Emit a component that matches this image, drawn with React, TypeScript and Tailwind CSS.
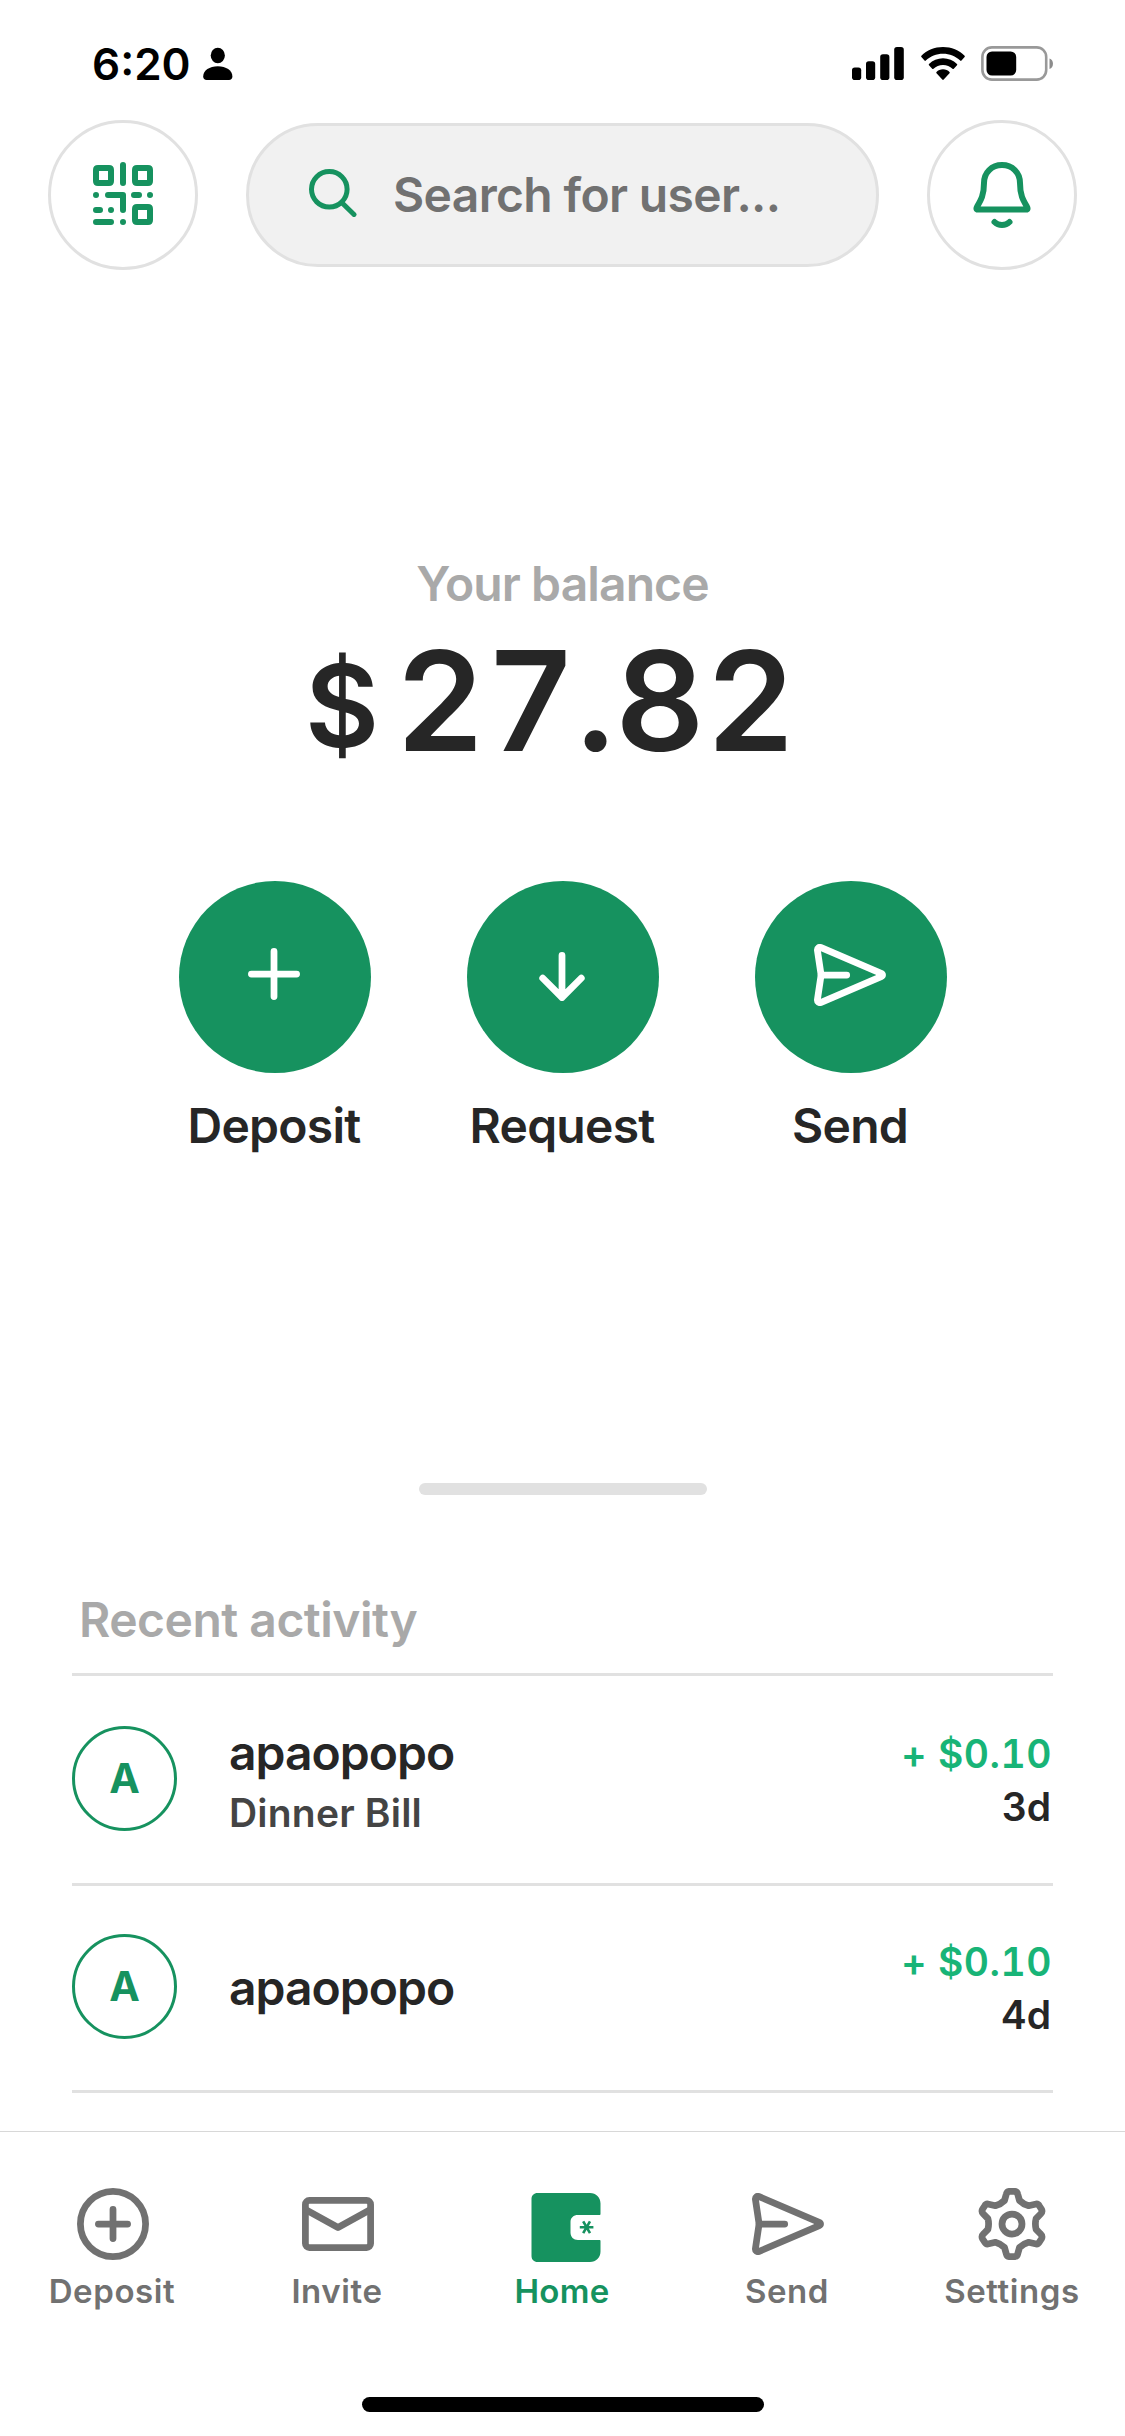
import React from 'react';

interface IconProps {
  className?: string;
}

const StatusPersonIcon: React.FC<IconProps> = ({ className }) => (
  <svg viewBox="0 0 30 34" className={className} fill="currentColor">
    <ellipse cx="14.8" cy="8.5" rx="7.1" ry="7.7" />
    <path d="M0.2 29.5C0.2 23.5 6.5 19.3 14.8 19.3S29.4 23.5 29.4 29.5C29.4 31.8 28 33 26 33H3.6C1.6 33 0.2 31.8 0.2 29.5Z" />
  </svg>
);

const SignalIcon: React.FC<IconProps> = ({ className }) => (
  <svg viewBox="0 0 52 33" className={className} fill="currentColor">
    <rect x="0" y="20.5" width="9.2" height="12.5" rx="2.8" />
    <rect x="14" y="14.3" width="9.2" height="18.7" rx="2.8" />
    <rect x="28.2" y="7.2" width="9.2" height="25.8" rx="2.8" />
    <rect x="42.2" y="0" width="9.6" height="33" rx="2.8" />
  </svg>
);

const WifiIcon: React.FC<IconProps> = ({ className }) => (
  <svg viewBox="0 0 44 33" className={className} fill="currentColor">
    <path d="M22 0C13.6 0 5.8 3.2 0.4 8.7C0 9.1 0 9.6 0.4 10L3.5 13.6C3.9 14 4.4 14 4.8 13.6C9.3 9.3 15.4 6.8 22 6.8S34.7 9.3 39.2 13.6C39.6 14 40.1 14 40.5 13.6L43.6 10C44 9.6 44 9.1 43.6 8.7C38.2 3.2 30.4 0 22 0Z" />
    <path d="M22 11.3C16.6 11.3 11.7 13.4 8 16.9C7.6 17.3 7.6 17.8 8 18.2L11.2 21.7C11.6 22.1 12.1 22.1 12.5 21.7C15 19.4 18.3 18 22 18S29 19.4 31.5 21.7C31.9 22.1 32.4 22.1 32.8 21.7L36 18.2C36.4 17.8 36.4 17.3 36 16.9C32.3 13.4 27.4 11.3 22 11.3Z" />
    <path d="M22 22.3C19.4 22.3 17.1 23.4 15.5 25C15.1 25.4 15.1 25.9 15.5 26.3L21.3 32.6C21.7 33 22.3 33 22.7 32.6L28.5 26.3C28.9 25.9 28.9 25.4 28.5 25C26.9 23.4 24.6 22.3 22 22.3Z" />
  </svg>
);

const BatteryIcon: React.FC<IconProps> = ({ className }) => (
  <svg viewBox="0 0 73 35" className={className}>
    <rect x="1.4" y="1.4" width="63.8" height="32.2" rx="9.5" fill="none" stroke="#999999" strokeWidth="2.6" />
    <rect x="5.5" y="5.5" width="29.7" height="24" rx="5.5" fill="#000000" />
    <path d="M68.5 12.5C70.8 13.3 72 15.3 72 17.7S70.8 22.1 68.5 22.9Z" fill="#8c8c8c" />
  </svg>
);

const QrIcon: React.FC<IconProps> = ({ className }) => (
  <svg viewBox="0 0 60 63" className={className} fill="none" stroke="currentColor" strokeWidth="6" strokeLinecap="round" strokeLinejoin="round">
    <path d="M5 6H16Q18 6 18 8V19Q18 21 16 21H5Q3 21 3 19V8Q3 6 5 6Z" />
    <path d="M44 6H55Q57 6 57 8V19Q57 21 55 21H44Q42 21 42 19V8Q42 6 44 6Z" />
    <path d="M44 45H55Q57 45 57 47V58Q57 60 55 60H44Q42 60 42 58V47Q42 45 44 45Z" />
    <path d="M30 3V21M3 33H3.01M15 33H30V48M41 33H46M57 33H57.01M3 48H7M18 48H18.01M3 60H18M30 60H30.01" />
  </svg>
);

const SearchIcon: React.FC<IconProps> = ({ className }) => (
  <svg viewBox="0 0 48 48" className={className} fill="none" stroke="currentColor" strokeWidth="5" strokeLinecap="round">
    <circle cx="20.3" cy="20.3" r="17.8" />
    <path d="M33.2 34L45 45.5" />
  </svg>
);

const BellIcon: React.FC<IconProps> = ({ className }) => (
  <svg viewBox="0 0 60 66" className={className} fill="none" stroke="currentColor" strokeWidth="6" strokeLinecap="round" strokeLinejoin="round">
    <path d="M12 21C12 10.5 19.8 3 30 3S48 10.5 48 21C48 33 51 38 55 44.8Q56.4 47.5 54.2 47.5H5.8Q3.6 47.5 5 44.8C9 38 12 33 12 21Z" />
    <path d="M22.5 60C26.5 64 33.5 64 37.5 60" />
  </svg>
);

const PlusIcon: React.FC<IconProps> = ({ className }) => (
  <svg viewBox="0 0 52 52" className={className} fill="none" stroke="currentColor" strokeWidth="6.75" strokeLinecap="round">
    <path d="M26 3.4V48.6M3.4 26H48.6" />
  </svg>
);

const ArrowDownIcon: React.FC<IconProps> = ({ className }) => (
  <svg viewBox="0 0 46 50" className={className} fill="none" stroke="currentColor" strokeWidth="6.75" strokeLinecap="round" strokeLinejoin="round">
    <path d="M23 3.4V45.5M3.7 26.2L23 45.5L42.3 26.2" />
  </svg>
);

const SendIcon: React.FC<IconProps> = ({ className }) => (
  <svg viewBox="0 0 72 62" className={className} fill="none" stroke="currentColor" strokeWidth="6.75" strokeLinecap="round" strokeLinejoin="round">
    <path d="M3.4 6.3C3.2 4 5.2 2.7 7.2 3.6L67.2 29.4C69 30.2 69 31.8 67.2 32.6L7.2 58.4C5.2 59.3 3.2 58 3.4 55.7L7.1 31Z" />
    <path d="M7.1 31H32.7" />
  </svg>
);

const PlusCircleIcon: React.FC<IconProps> = ({ className }) => (
  <svg viewBox="0 0 72 72" className={className} fill="none" stroke="currentColor" strokeWidth="6.75" strokeLinecap="round">
    <circle cx="36" cy="36" r="32.6" />
    <path d="M36 21.4V50.6M21.4 36H50.6" />
  </svg>
);

const MailIcon: React.FC<IconProps> = ({ className }) => (
  <svg viewBox="0 0 72 72" className={className} fill="none" stroke="currentColor" strokeWidth="6.75" strokeLinejoin="round">
    <rect x="3.4" y="12.4" width="65.2" height="47.2" rx="4" />
    <path d="M3.4 21.5L36 39.5L68.6 21.5" />
  </svg>
);

const WalletIcon: React.FC<IconProps> = ({ className }) => (
  <svg viewBox="0 0 72 72" className={className}>
    <path
      d="M10.5 5H63C69 5 73.5 9.5 73.5 15.5V26C73.5 26.6 73.1 27 72.5 27H51C46.5 27 43.5 29.7 43.5 34V44.5C43.5 49 46.5 52 51 52H72.5C73.1 52 73.5 52.4 73.5 53V63.5C73.5 69.5 69 74 63 74H10.5C7 74 4.5 71.5 4.5 68V11C4.5 7.5 7 5 10.5 5Z"
      fill="currentColor"
    />
    <path d="M52.8 39.3H66.4M56.2 33.4L63 45.2M63 33.4L56.2 45.2" stroke="currentColor" strokeWidth="2.6" />
  </svg>
);

const GearIcon: React.FC<IconProps> = ({ className }) => (
  <svg viewBox="-36 -36 72 72" className={className} fill="none" stroke="currentColor" strokeWidth="6.75" strokeLinejoin="round">
    <circle r="10" />
    <path d="M-2 -32.7Q-5 -32.7 -5.7 -29.9L-7.5 -23.5Q-11.3 -19.7 -16.6 -18.3L-23.1 -19.7Q-25.8 -20.7 -27.4 -18L-29.5 -14.7Q-30.8 -12 -28.6 -10L-24.1 -5.3Q-22.7 0 -24.1 5.3L-28.6 10Q-30.8 12 -29.5 14.7L-27.4 18Q-25.8 20.7 -23.1 19.7L-16.6 18.3Q-11.3 19.7 -7.5 23.5L-5.7 29.9Q-5 32.7 -2 32.7H2Q5 32.7 5.7 29.9L7.5 23.5Q11.3 19.7 16.6 18.3L23.1 19.7Q25.8 20.7 27.4 18L29.5 14.7Q30.8 12 28.6 10L24.1 5.3Q22.7 0 24.1 -5.3L28.6 -10Q30.8 -12 29.5 -14.7L27.4 -18Q25.8 -20.7 23.1 -19.7L16.6 -18.3Q11.3 -19.7 7.5 -23.5L5.7 -29.9Q5 -32.7 2 -32.7Z" />
  </svg>
);

const actions = [
  { label: 'Deposit', icon: <PlusIcon className="w-[52px] h-[52px] mr-[2px] mb-[6px]" /> },
  { label: 'Request', icon: <ArrowDownIcon className="w-[46px] h-[50px] mr-px" /> },
  { label: 'Send', icon: <SendIcon className="w-[72px] h-[62px] mb-1 mr-[2px]" /> },
];

const activity = [
  { id: 1, user: 'apaopopo', note: 'Dinner Bill', amount: '+ $0.10', age: '3d' },
  { id: 2, user: 'apaopopo', note: '', amount: '+ $0.10', age: '4d' },
];

const tabs = [
  { label: 'Deposit', icon: <PlusCircleIcon className="w-[72px] h-[72px]" /> },
  { label: 'Invite', icon: <MailIcon className="w-[72px] h-[72px]" /> },
  { label: 'Home', icon: <WalletIcon className="w-[72px] h-[72px] overflow-visible" />, active: true },
  { label: 'Send', icon: <SendIcon className="w-[72px] h-[62px]" /> },
  { label: 'Settings', icon: <GearIcon className="w-[72px] h-[72px] mr-px" /> },
];

const App: React.FC = () => {
  return (
    <div className="flex flex-col w-[1125px] h-[2436px] bg-white overflow-hidden font-['Inter',sans-serif] font-semibold text-[#262626]">
      {/* STATUS BAR */}
      <div className="flex justify-between items-start h-[120px] shrink-0 pl-[92px] pr-[71px] text-black">
        <div className="flex items-start pt-[34px]">
          <span className="text-[44px] leading-[60px]">6:20</span>
          <StatusPersonIcon className="w-[30px] h-[34px] mt-[13px] ml-[12px]" />
        </div>
        <div className="flex items-start pt-[46px]">
          <SignalIcon className="w-[52px] h-[33px] mt-px mr-[17px]" />
          <WifiIcon className="w-[44px] h-[33px] mt-px mr-[16px]" />
          <BatteryIcon className="w-[73px] h-[35px]" />
        </div>
      </div>

      {/* HEADER */}
      <div className="flex items-center gap-12 h-[150px] shrink-0 px-12 text-[#16925f]">
        <button className="flex items-center justify-center w-[150px] h-[150px] rounded-full border-[3px] border-[#e1e1e1]">
          <QrIcon className="w-[60px] h-[63px] mb-[3px]" />
        </button>
        <div className="flex flex-1 items-center h-36 pl-[60px] rounded-full border-[3px] border-[#e1e1e1] bg-[#f1f1f1]">
          <SearchIcon className="w-12 h-12 mb-1 mr-[36px]" />
          <span className="text-[48px] leading-[60px] tracking-[-0.65px] text-[#717171]">Search for user...</span>
        </div>
        <button className="flex items-center justify-center w-[150px] h-[150px] rounded-full border-[3px] border-[#e1e1e1]">
          <BellIcon className="w-[60px] h-[66px]" />
        </button>
      </div>

      {/* BALANCE */}
      <div className="flex flex-col shrink-0 mt-[284px]">
        <p className="text-center text-[48px] leading-[60px] tracking-[-0.9px] text-[#a9a9a9]">Your balance</p>
        <div className="flex items-start h-[140px] mt-4 pl-[305px]">
          <span className="text-[114px] leading-[152px]">$</span>
          <span className="ml-[16px] text-[139px] leading-[142px] tabular-nums tracking-[0.9px]">27.82</span>
        </div>
      </div>

      {/* QUICK ACTIONS */}
      <div className="flex justify-center gap-24 shrink-0 mt-[111px]">
        {actions.map((action) => (
          <div key={action.label} className="flex flex-col items-center w-48">
            <div className="flex items-center justify-center w-48 h-48 rounded-full bg-[#16925f] text-white">
              {action.icon}
            </div>
            <span className="mt-[23px] mr-px text-[48px] leading-[60px] tracking-[-0.75px]">{action.label}</span>
          </div>
        ))}
      </div>

      {/* RECENT ACTIVITY SHEET */}
      <div className="flex flex-col shrink-0 mt-[327px] px-[72px]">
        <div className="w-72 h-3 rounded-full bg-[#e1e1e1] self-center" />
        <h2 className="mt-[95px] pl-[7px] pb-[23px] text-[48px] leading-[60px] tracking-[-0.5px] text-[#a9a9a9] border-b-[3px] border-[#e1e1e1]">
          Recent activity
        </h2>
        {activity.map((item) => (
          <div key={item.id} className={`flex border-b-[3px] border-[#e1e1e1] ${item.note ? 'h-[210px] pt-[50px]' : 'h-[207px] pt-[48px]'}`}>
            <div className="flex items-center justify-center w-[105px] h-[105px] rounded-full border-[3px] border-[#16925f] text-[#16925f] text-[41px] font-bold">
              A
            </div>
            <div className={`flex flex-col ml-[52px] ${item.note ? '-mt-[3px]' : 'mt-6'}`}>
              <span className="text-[48px] leading-[60px] tracking-[-1px]">{item.user}</span>
              {item.note && <span className="text-[39px] leading-[60px] tracking-[0.2px] text-[#444444]">{item.note}</span>}
            </div>
            <div className="flex flex-col items-end mt-px ml-auto text-[39px] leading-[53px]">
              <span className="pr-px tabular-nums tracking-[0.5px] text-[#18b477]">{item.amount}</span>
              <span className="pr-[2px]">{item.age}</span>
            </div>
          </div>
        ))}
      </div>

      {/* TAB BAR */}
      <div className="grid grid-cols-5 shrink-0 mt-[38px] pt-[56px] border-t border-[#d8d8d8]">
        {tabs.map((tab) => (
          <div key={tab.label} className={`flex flex-col items-center ${tab.active ? 'text-[#16925f] tracking-[0.3px]' : 'text-[#717171] tracking-[0.6px]'}`}>
            <div className="flex items-center justify-center h-[72px]">{tab.icon}</div>
            <span className="mt-[11px] mr-px text-[33px] leading-[40px]">{tab.label}</span>
          </div>
        ))}
      </div>

      {/* HOME INDICATOR */}
      <div className="w-[402px] h-[15px] mt-auto mb-6 shrink-0 rounded-full bg-black self-center" />
    </div>
  );
};

export default App;
